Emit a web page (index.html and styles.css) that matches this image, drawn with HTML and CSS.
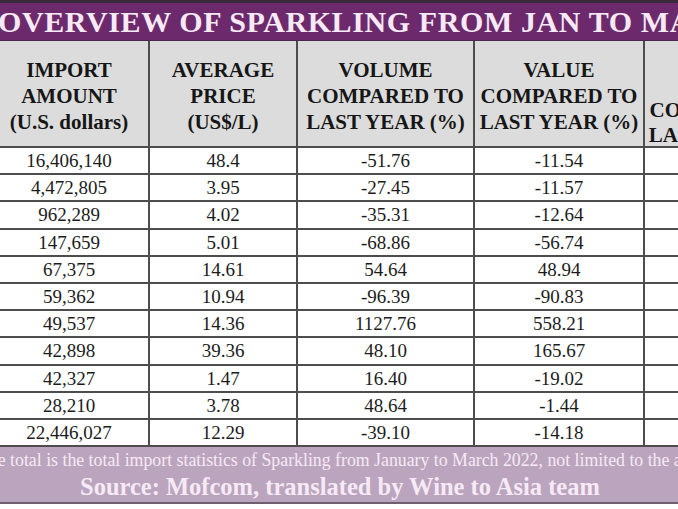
FILE: index.html
```html
<!DOCTYPE html>
<html lang="en">
<head>
<meta charset="utf-8">
<title>Overview of Sparkling</title>
<link rel="stylesheet" href="styles.css">
</head>
<body>
<div class="page">
  <div class="sheet">
    <div class="topbar"></div>
    <h1 class="title">OVERVIEW OF SPARKLING FROM JAN TO MARCH 2022</h1>
    <table class="grid">
      <thead>
        <tr>
          <th class="c1">IMPORT<br>AMOUNT<br>(U.S. dollars)</th>
          <th class="c2">AVERAGE<br>PRICE<br>(US$/L)</th>
          <th class="c3">VOLUME<br>COMPARED TO<br>LAST YEAR (%)</th>
          <th class="c4">VALUE<br>COMPARED TO<br>LAST YEAR (%)</th>
          <th class="c5"><div class="clip">UNIT<br>PRICE<br>COMPARED TO<br>LAST YEAR (%)</div></th>
        </tr>
      </thead>
      <tbody>
        <tr><td>16,406,140</td><td>48.4</td><td>-51.76</td><td>-11.54</td><td></td></tr>
        <tr><td>4,472,805</td><td>3.95</td><td>-27.45</td><td>-11.57</td><td></td></tr>
        <tr><td>962,289</td><td>4.02</td><td>-35.31</td><td>-12.64</td><td></td></tr>
        <tr><td>147,659</td><td>5.01</td><td>-68.86</td><td>-56.74</td><td></td></tr>
        <tr><td>67,375</td><td>14.61</td><td>54.64</td><td>48.94</td><td></td></tr>
        <tr><td>59,362</td><td>10.94</td><td>-96.39</td><td>-90.83</td><td></td></tr>
        <tr><td>49,537</td><td>14.36</td><td>1127.76</td><td>558.21</td><td></td></tr>
        <tr><td>42,898</td><td>39.36</td><td>48.10</td><td>165.67</td><td></td></tr>
        <tr><td>42,327</td><td>1.47</td><td>16.40</td><td>-19.02</td><td></td></tr>
        <tr><td>28,210</td><td>3.78</td><td>48.64</td><td>-1.44</td><td></td></tr>
        <tr><td>22,446,027</td><td>12.29</td><td>-39.10</td><td>-14.18</td><td></td></tr>
      </tbody>
    </table>
    <div class="foot">
      <p class="note">The total is the total import statistics of Sparkling from January to March 2022, not limited to the above countries.</p>
      <p class="source">Source: Mofcom, translated by Wine to Asia team</p>
    </div>
  </div>
</div>
</body>
</html>
```
FILE: styles.css
```css
html, body {
  margin: 0;
  padding: 0;
  background: #ffffff;
}

.page {
  width: 678px;
  height: 509px;
  overflow: hidden;
  font-family: "Liberation Serif", "Times New Roman", serif;
  color: #1a1a1a;
}

.sheet {
  width: 840px;
  margin-left: -10px;
}

.topbar {
  height: 3px;
  background: #3b2b3a;
}

.title {
  margin: 0;
  height: 38px;
  box-sizing: border-box;
  background: #6c2a6c;
  border-bottom: 1px solid #4a2a4a;
  color: #f7e9f5;
  font-size: 30px;
  font-weight: bold;
  line-height: 38px;
  white-space: nowrap;
  padding-left: 8px;
  letter-spacing: 0.6px;
}

.grid {
  border-collapse: collapse;
  table-layout: fixed;
  width: 813px;
}

.grid th,
.grid td {
  border: 2px solid #4d4d4d;
  text-align: center;
  padding: 0;
  overflow: hidden;
  white-space: nowrap;
}

.grid tr > :first-child {
  border-left: none;
}

.grid thead tr:first-child > * {
  border-top: none;
}

.grid th {
  background: #dcdcdc;
  height: 101px;
  padding-top: 4px;
  font-size: 21px;
  font-weight: bold;
  line-height: 26px;
  color: #161616;
}

.grid th.c5 {
  vertical-align: top;
}

.clip {
  height: 101px;
  overflow: hidden;
  box-sizing: border-box;
  padding-top: 3px;
  line-height: 25px;
}

.grid td {
  background: #ffffff;
  height: 25.2px;
  font-size: 19px;
  line-height: 25px;
  color: #1c1c1c;
}

.c1 { width: 158px; }
.c2 { width: 146px; }
.c3 { width: 175px; }
.c4 { width: 168px; }
.c5 { width: 166px; }

.foot {
  background: #bba4bd;
  border-bottom: 2px solid #6f5f6e;
  height: 55px;
  color: #f6eaf6;
  white-space: nowrap;
}

.note {
  margin: 0;
  font-size: 17.8px;
  line-height: 26px;
  margin-left: -12px;
}

.source {
  margin: 0;
  font-size: 24.5px;
  font-weight: bold;
  line-height: 28px;
  padding-left: 90px;
}
```
